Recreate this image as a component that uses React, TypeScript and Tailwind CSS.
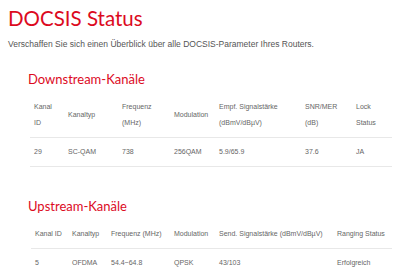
// @ts-nocheck
import React from 'react';

const downCols = [
  { label: ['Kanal', 'ID'], w: 'w-[34px]' },
  { label: ['Kanaltyp'], w: 'w-[54px]' },
  { label: ['Frequenz', '(MHz)'], w: 'w-[52px]' },
  { label: ['Modulation'], w: 'w-[45px]' },
  { label: ['Empf. Signalstärke', '(dBmV/dBµV)'], w: 'w-[86px]' },
  { label: ['SNR/MER', '(dB)'], w: 'w-[51px]' },
  { label: ['Lock', 'Status'], w: 'w-[40px]' },
];

const downRows = [['29', 'SC-QAM', '738', '256QAM', '5.9/65.9', '37.6', 'JA']];

const upCols = [
  { label: ['Kanal ID'], w: 'w-[37px]' },
  { label: ['Kanaltyp'], w: 'w-[39px]' },
  { label: ['Frequenz (MHz)'], w: 'w-[63px]' },
  { label: ['Modulation'], w: 'w-[45px]' },
  { label: ['Send. Signalstärke (dBmV/dBµV)'], w: 'w-[118px]' },
  { label: ['Ranging Status'], w: 'w-[59px]' },
];

const upRows = [['5', 'OFDMA', '54.4~64.8', 'QPSK', '43/103', 'Erfolgreich']];

const KanalTabelle = ({ cols, rows }) => (
  <table className="table-fixed border-collapse w-full text-[7px] leading-[16px] text-[#666] font-['Liberation_Sans',Arial,sans-serif]">
    <thead>
      <tr className="border-b border-[#e8e8e8]">
        {cols.map((c, i) => (
          <th key={i} className={`${c.w} font-normal text-left align-middle pl-[4px] py-[6px] whitespace-nowrap`}>
            {c.label.map((l, j) => (
              <div key={j}>{l}</div>
            ))}
          </th>
        ))}
      </tr>
    </thead>
    <tbody>
      {rows.map((r, i) => (
        <tr key={i} className="border-b border-[#e8e8e8]">
          {r.map((v, j) => (
            <td key={j} className="pl-[4px] py-[6px] text-left">{v}</td>
          ))}
        </tr>
      ))}
    </tbody>
  </table>
);

export default function App() {
  return (
    <div className="w-[399px] h-[274px] overflow-hidden bg-white pt-[6px] pl-[8px] pr-[7px]">
      <h1 className="text-[20.5px] leading-[24px] text-[#dc0a1e] font-['Lato',sans-serif] font-normal">
        DOCSIS Status
      </h1>
      <p className="mt-[8px] text-[8.5px] leading-[12px] text-[#555] font-['Liberation_Sans',Arial,sans-serif]">
        Verschaffen Sie sich einen Überblick über alle DOCSIS-Parameter Ihres Routers.
      </p>

      <section className="mt-[20px] pl-[20px]">
        <h2 className="text-[13px] leading-[18px] text-[#dc0a1e] font-['Lato',sans-serif] font-normal">
          Downstream-Kanäle
        </h2>
        <div className="mt-[5px] pl-[2px]">
          <KanalTabelle cols={downCols} rows={downRows} />
        </div>
      </section>

      <section className="mt-[30px] pl-[20px]">
        <h2 className="text-[13px] leading-[18px] text-[#dc0a1e] font-['Lato',sans-serif] font-normal">
          Upstream-Kanäle
        </h2>
        <div className="mt-[5px] pl-[3px]">
          <KanalTabelle cols={upCols} rows={upRows} />
        </div>
      </section>
    </div>
  );
}
